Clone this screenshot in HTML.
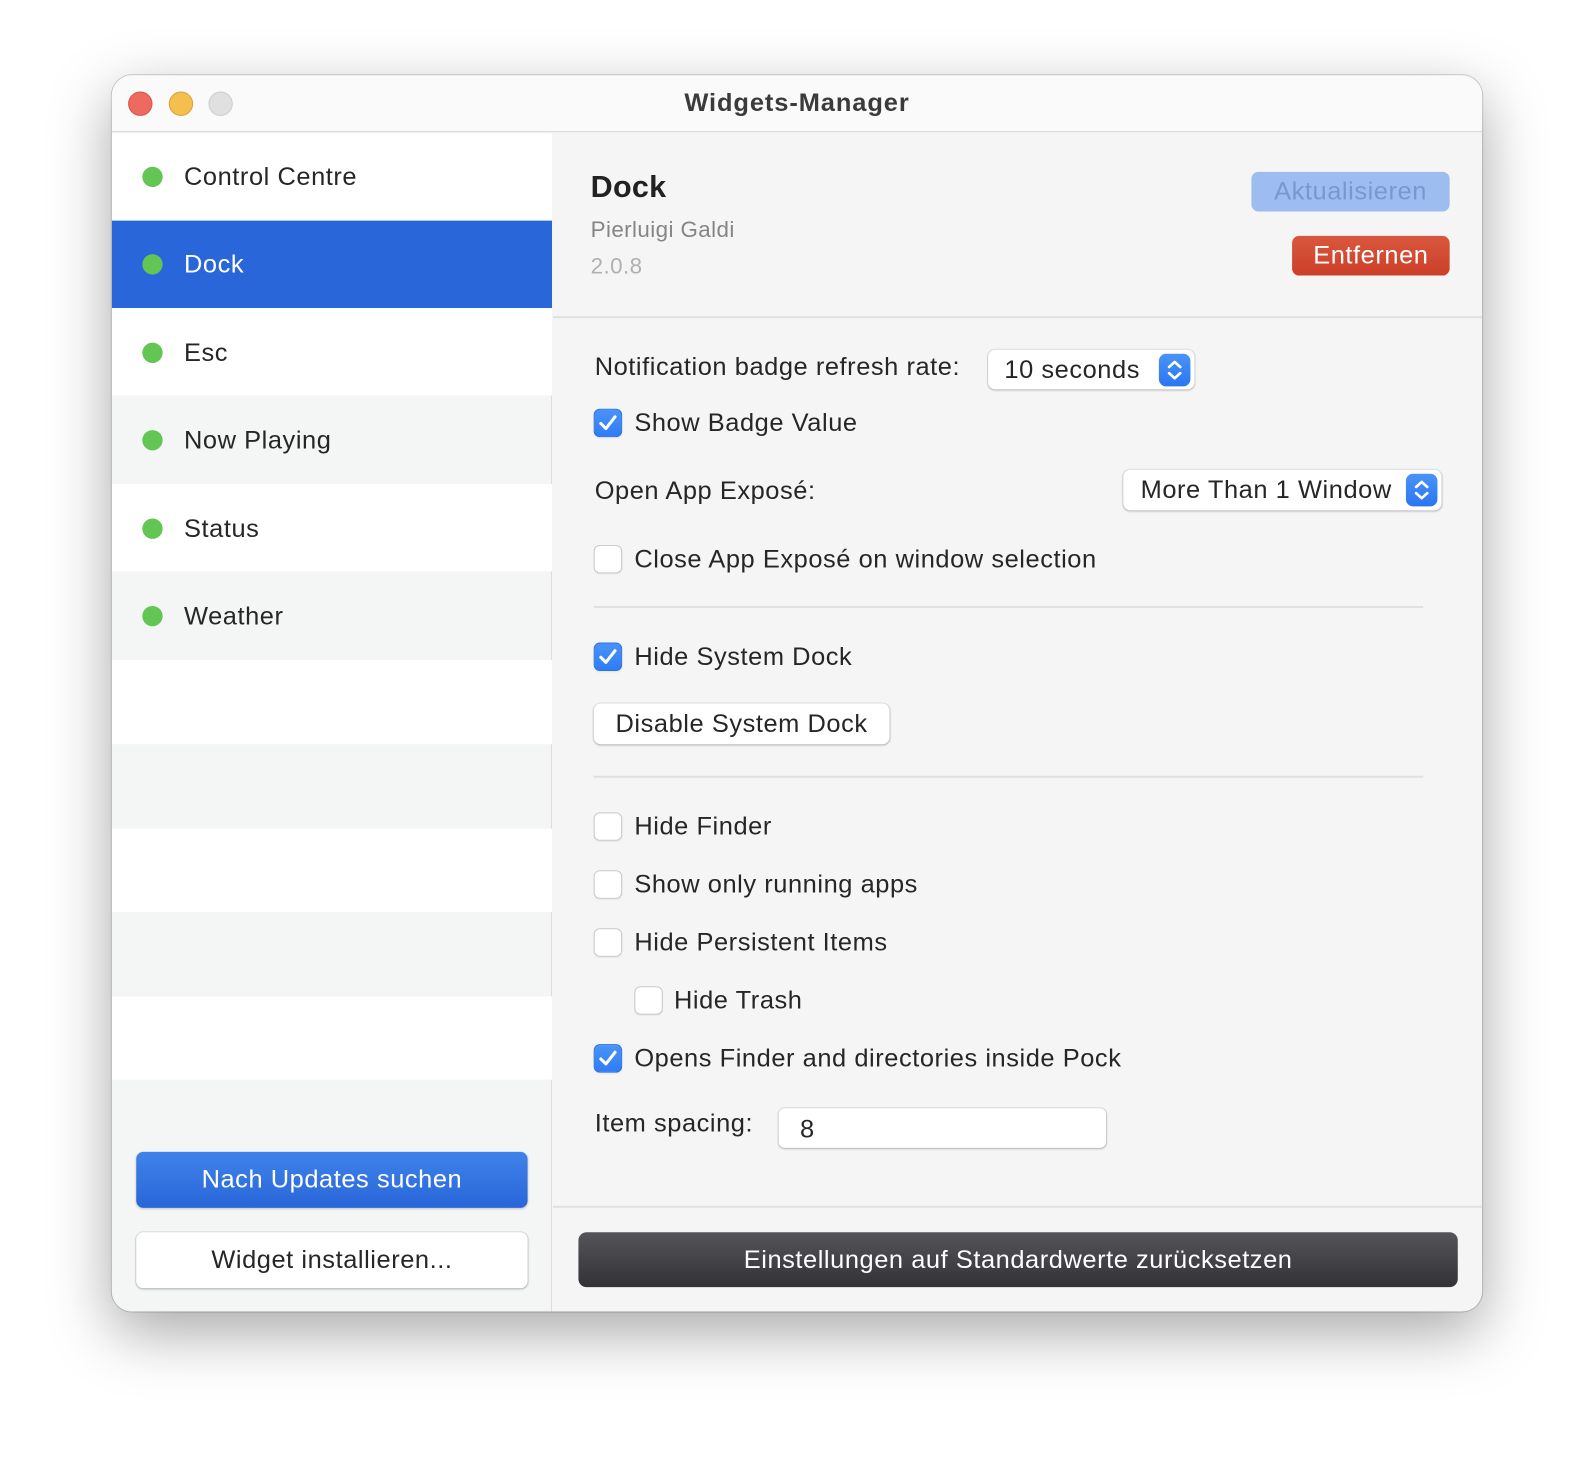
<!DOCTYPE html>
<html><head><meta charset="utf-8">
<style>
*{margin:0;padding:0;box-sizing:border-box}
html,body{width:1594px;height:1460px;overflow:hidden;background:#fff}
body{font-family:"Liberation Sans",sans-serif;color:#262626}
#s{position:absolute;left:0;top:0;width:1568px;height:1436px;transform:scale(1.01658,1.0167);transform-origin:0 0}
.a{position:absolute}
.win{left:110px;top:74px;width:1348px;height:1216px;border-radius:20px;background:#f5f5f5;overflow:hidden;box-shadow:0 20px 60px rgba(0,0,0,.35),0 0 0 1px rgba(0,0,0,.18)}
.t{position:absolute;font-size:25px;letter-spacing:0.55px;line-height:30px;white-space:nowrap}
.row{position:absolute;left:0;width:433px}
.dot{position:absolute;left:30px;width:20px;height:20px;border-radius:50%;background:#62c554}
.cb{position:absolute;width:28px;height:28px;border-radius:6px;background:#fff;border:1px solid #c9c9c9;box-shadow:0 1px 1px rgba(0,0,0,.05)}
.cb.on{background:linear-gradient(#4a93f8,#2f7cf6);border-color:#2b72e0}
.sep{position:absolute;height:2px;background:#e0e0e0}
.btn{position:absolute;background:#fff;border-radius:7px;box-shadow:0 0 0 1px rgba(0,0,0,.08),0 1px 2px rgba(0,0,0,.2);text-align:center}
.step{position:absolute;width:31px;height:32px;border-radius:7px;background:linear-gradient(#4a93f8,#2a76f0)}
</style></head><body><div id="s">
<div class="a win">
  <div class="a" style="left:0;top:0;width:1348px;height:56px;background:#fafafa;border-bottom:1px solid #d6d6d6"></div>
  <div class="a" style="left:16px;top:16px;width:24px;height:24px;border-radius:50%;background:#ee6a5e;border:1px solid #d5544a"></div>
  <div class="a" style="left:56px;top:16px;width:24px;height:24px;border-radius:50%;background:#f5bf4f;border:1px solid #d9a23a"></div>
  <div class="a" style="left:95px;top:16px;width:24px;height:24px;border-radius:50%;background:#e0e0e0;border:1px solid #cdcdcd"></div>
  <div class="t" style="left:0;width:1348px;text-align:center;top:12px;font-weight:bold;color:#3b3b3b;font-size:25px;letter-spacing:0.9px">Widgets-Manager</div>

  <div class="a" style="left:0;top:57px;width:433px;height:1159px;background:#f4f5f5;border-right:1px solid #dcdcdc"></div>
  <div class="row" style="top:57px;height:86px;background:#fff"></div>
  <div class="row" style="top:143px;height:86px;background:#2966d9"></div>
  <div class="row" style="top:229px;height:86px;background:#fff"></div>
  <div class="row" style="top:402px;height:86px;background:#fff"></div>
  <div class="row" style="top:575px;height:83px;background:#fff"></div>
  <div class="row" style="top:741px;height:82px;background:#fff"></div>
  <div class="row" style="top:906px;height:82px;background:#fff"></div>

  <div class="dot" style="top:90px"></div><div class="t" style="left:71px;top:85px">Control Centre</div>
  <div class="dot" style="top:176px"></div><div class="t" style="left:71px;top:171px;color:#fff">Dock</div>
  <div class="dot" style="top:263px"></div><div class="t" style="left:71px;top:258px">Esc</div>
  <div class="dot" style="top:349px"></div><div class="t" style="left:71px;top:344px">Now Playing</div>
  <div class="dot" style="top:436px"></div><div class="t" style="left:71px;top:431px">Status</div>
  <div class="dot" style="top:522px"></div><div class="t" style="left:71px;top:517px">Weather</div>

  <div class="btn" style="left:24px;top:1059px;width:385px;height:55px;background:linear-gradient(#3f83ea,#2966d9);box-shadow:0 1px 2px rgba(0,0,0,.2)"><div class="t" style="position:static;line-height:55px;color:#fff">Nach Updates suchen</div></div>
  <div class="btn" style="left:24px;top:1138px;width:385px;height:55px"><div class="t" style="position:static;line-height:55px">Widget installieren...</div></div>

  <div class="t" style="left:471px;top:93px;font-size:30px;line-height:36px;font-weight:bold;color:#222;letter-spacing:0.3px">Dock</div>
  <div class="t" style="left:471px;top:137px;font-size:22px;letter-spacing:0.4px;color:#858585">Pierluigi Galdi</div>
  <div class="t" style="left:471px;top:173px;font-size:22px;letter-spacing:0.4px;color:#b0b0b0">2.0.8</div>
  <div class="a" style="left:1121px;top:95px;width:195px;height:39px;border-radius:7px;background:#9dbcef;text-align:center"><div class="t" style="position:static;line-height:39px;color:#7a98cf">Aktualisieren</div></div>
  <div class="a" style="left:1161px;top:158px;width:155px;height:39px;border-radius:7px;background:linear-gradient(#d9573e,#cc3f28);text-align:center"><div class="t" style="position:static;line-height:39px;color:#fff">Entfernen</div></div>
  <div class="sep" style="left:434px;top:237px;width:914px"></div>

  <div class="t" style="left:475px;top:272px">Notification badge refresh rate:</div>
  <div class="btn" style="left:862px;top:270px;width:203px;height:39px"><div class="t" style="left:16px;top:5px">10 seconds</div>
    <div class="step" style="left:168px;top:4px"><svg width="31" height="32" viewBox="0 0 31 32"><path d="M10 13 L15.5 8 L21 13 M10 19 L15.5 24 L21 19" stroke="#fff" stroke-width="2.6" fill="none" stroke-linecap="round" stroke-linejoin="round"/></svg></div></div>

  <div class="cb on" style="left:474px;top:328px"><svg width="26" height="26" viewBox="0 0 26 26"><path d="M6 13.5 L11 18.5 L20 7" stroke="#fff" stroke-width="3" fill="none" stroke-linecap="round" stroke-linejoin="round"/></svg></div>
  <div class="t" style="left:514px;top:327px">Show Badge Value</div>

  <div class="t" style="left:475px;top:394px">Open App Exposé:</div>
  <div class="btn" style="left:995px;top:388px;width:313px;height:40px"><div class="t" style="left:17px;top:5px">More Than 1 Window</div>
    <div class="step" style="left:278px;top:4px"><svg width="31" height="32" viewBox="0 0 31 32"><path d="M10 13 L15.5 8 L21 13 M10 19 L15.5 24 L21 19" stroke="#fff" stroke-width="2.6" fill="none" stroke-linecap="round" stroke-linejoin="round"/></svg></div></div>

  <div class="cb" style="left:474px;top:462px"></div>
  <div class="t" style="left:514px;top:461px">Close App Exposé on window selection</div>
  <div class="sep" style="left:474px;top:522px;width:816px"></div>

  <div class="cb on" style="left:474px;top:558px"><svg width="26" height="26" viewBox="0 0 26 26"><path d="M6 13.5 L11 18.5 L20 7" stroke="#fff" stroke-width="3" fill="none" stroke-linecap="round" stroke-linejoin="round"/></svg></div>
  <div class="t" style="left:514px;top:557px">Hide System Dock</div>
  <div class="btn" style="left:474px;top:618px;width:291px;height:40px"><div class="t" style="position:static;line-height:40px">Disable System Dock</div></div>
  <div class="sep" style="left:474px;top:689px;width:816px"></div>

  <div class="cb" style="left:474px;top:725px"></div><div class="t" style="left:514px;top:724px">Hide Finder</div>
  <div class="cb" style="left:474px;top:782px"></div><div class="t" style="left:514px;top:781px">Show only running apps</div>
  <div class="cb" style="left:474px;top:839px"></div><div class="t" style="left:514px;top:838px">Hide Persistent Items</div>
  <div class="cb" style="left:514px;top:896px"></div><div class="t" style="left:553px;top:895px">Hide Trash</div>
  <div class="cb on" style="left:474px;top:953px"><svg width="26" height="26" viewBox="0 0 26 26"><path d="M6 13.5 L11 18.5 L20 7" stroke="#fff" stroke-width="3" fill="none" stroke-linecap="round" stroke-linejoin="round"/></svg></div>
  <div class="t" style="left:514px;top:952px">Opens Finder and directories inside Pock</div>

  <div class="t" style="left:475px;top:1016px">Item spacing:</div>
  <div class="btn" style="left:656px;top:1016px;width:322px;height:39px;border-radius:6px"><div class="t" style="left:21px;top:6px">8</div></div>

  <div class="sep" style="left:434px;top:1112px;width:914px"></div>
  <div class="a" style="left:459px;top:1138px;width:865px;height:54px;border-radius:8px;background:linear-gradient(#545459,#333337);text-align:center"><div class="t" style="position:static;line-height:54px;color:#fff">Einstellungen auf Standardwerte zurücksetzen</div></div>
</div>
</div></body></html>
